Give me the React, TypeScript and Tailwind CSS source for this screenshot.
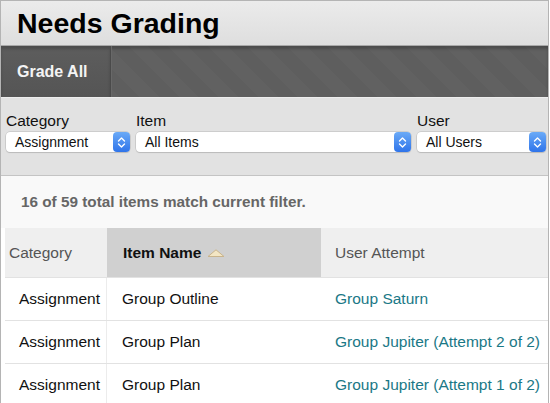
import React from "react";

const font = "font-['Liberation_Sans',Arial,sans-serif]";

function Stepper() {
  return (
    <div className="flex h-full w-[17px] items-center justify-center rounded-[4px] bg-[linear-gradient(#6aaaf7,#2f74ea)]">
      <svg width="9" height="13" viewBox="0 0 9 13" fill="none">
        <path d="M1.5 5L4.5 2L7.5 5" stroke="white" strokeWidth="1.4" strokeLinecap="round" strokeLinejoin="round" />
        <path d="M1.5 8L4.5 11L7.5 8" stroke="white" strokeWidth="1.4" strokeLinecap="round" strokeLinejoin="round" />
      </svg>
    </div>
  );
}

function Select({ value, width }: { value: string; width: string }) {
  return (
    <div
      className={`flex h-[20px] ${width} items-center rounded-[4px] bg-white shadow-[0_0_0_0.5px_#b8b8b8,0_1px_1px_rgba(0,0,0,0.15)]`}
    >
      <span className="flex-1 pl-[9px] text-[14px] leading-none text-[#111]">{value}</span>
      <Stepper />
    </div>
  );
}

function Filter({ label, value, width }: { label: string; value: string; width: string }) {
  return (
    <div className="flex flex-col">
      <span className="text-[15.5px] leading-[18px] text-[#111]">{label}</span>
      <div className="mt-[2px]">
        <Select value={value} width={width} />
      </div>
    </div>
  );
}

const rows = [
  { category: "Assignment", item: "Group Outline", attempt: "Group Saturn" },
  { category: "Assignment", item: "Group Plan", attempt: "Group Jupiter (Attempt 2 of 2)" },
  { category: "Assignment", item: "Group Plan", attempt: "Group Jupiter (Attempt 1 of 2)" },
];

export default function App() {
  return (
    <div className={`${font} h-[403px] w-[550px] overflow-hidden bg-white`}>
      <div className="h-[403px] w-[549px] overflow-hidden border-l border-r border-t border-[#b4b4b4]">
        {/* Page title */}
        <div className="flex h-[45px] items-center border-b border-[#a8a8a8] bg-[linear-gradient(#ebebeb,#dedede)] pl-[16px]">
          <h1 className="text-[28.5px] font-bold leading-none text-black">Needs Grading</h1>
        </div>

        {/* Action bar */}
        <div className="flex h-[51px] bg-[repeating-linear-gradient(45deg,#5e5e5e_0px,#5e5e5e_14px,#616161_14px,#616161_28px)] shadow-[inset_0_3px_3px_rgba(0,0,0,0.22)]">
          <div className="flex w-[110px] items-center border-r border-[#4a4a4a] bg-[linear-gradient(#5d5d5d,#555555)] pl-[16px] shadow-[inset_0_3px_3px_rgba(0,0,0,0.18)]">
            <span className="text-[16px] font-bold text-[#f4f4f4]">Grade All</span>
          </div>
          <div className="w-px bg-[#686868]" />
        </div>

        {/* Filters */}
        <div className="flex h-[79px] gap-[6px] border-b border-t border-[#c4c4c4] border-t-[#ededed] bg-[#e2e2e2] pl-[5px] pt-[14px]">
          <Filter label="Category" value="Assignment" width="w-[124px]" />
          <Filter label="Item" value="All Items" width="w-[275px]" />
          <Filter label="User" value="All Users" width="w-[129px]" />
        </div>

        {/* Match count */}
        <div className="flex h-[52px] items-center bg-[#f9f9f9] pl-[20px]">
          <span className="text-[15.3px] font-bold text-[#666]">16 of 59 total items match current filter.</span>
        </div>

        {/* Results table */}
        <div className="pl-[4px]">
          <div className="grid grid-cols-[102px_214px_1fr] border-b border-[#e2e2e2]">
            <div className="flex h-[49px] items-center bg-[#efefef] pl-[4px] text-[15.5px] text-[#555]">Category</div>
            <div className="flex h-[49px] items-center bg-[#d0d0d0] pl-[16px] text-[15.5px] font-bold text-[#111]">
              Item Name
              <svg className="ml-[6px]" width="18" height="8" viewBox="0 0 18 8">
                <path d="M1 7.5L9 0.8L17 7.5Z" fill="#f3e6c4" stroke="#c9b48c" strokeWidth="1" strokeLinejoin="round" />
              </svg>
            </div>
            <div className="flex h-[49px] items-center bg-[#efefef] pl-[14px] text-[15.5px] text-[#555]">User Attempt</div>
          </div>
          {rows.map((r, i) => (
            <div key={i} className="grid h-[43px] grid-cols-[102px_214px_1fr] border-b border-[#e2e2e2]">
              <div className="flex items-center border-r border-[#ececec] pl-[14px] text-[15.5px] text-[#111]">{r.category}</div>
              <div className="flex items-center pl-[15px] text-[15.5px] text-[#111]">{r.item}</div>
              <div className="flex items-center pl-[14px] text-[15.5px] text-[#1a7886]">{r.attempt}</div>
            </div>
          ))}
        </div>
      </div>
    </div>
  );
}
